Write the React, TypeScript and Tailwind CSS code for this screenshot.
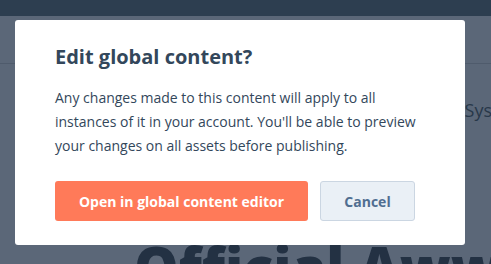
export default function App() {
	return (
		<div className="relative w-[491px] h-[264px] overflow-hidden bg-[#5b6778] font-['Open_Sans','Liberation_Sans',sans-serif]">
			<div className="h-4 bg-[#2d3e50]" />
			<div className="h-[48px] border-b border-[#4f5b6c]" />
			<div className="flex justify-end pt-[33px] h-[60px]">
				<span className="text-[18px] leading-[27px] text-[#28384a] -mr-[1px]">Sys</span>
			</div>
			<div className="pl-[134px] pt-[114px] text-[56px] leading-none font-extrabold text-[#233143] whitespace-nowrap">
				Official Awwwards
			</div>

			<div className="absolute left-[15px] top-[20px] w-[450px] h-[225px] rounded-[3px] bg-white px-10 pt-[23px]">
				<h2 className="text-[20px] leading-[28px] font-bold text-[#33475b]">Edit global content?</h2>
				<p className="mt-[15px] text-[14px] leading-[24px] text-[#33475b]">
					Any changes made to this content will apply to all instances of it in your account. You'll be able to preview your changes on all assets before publishing.
				</p>
				<div className="mt-[23px] flex gap-3">
					<button
						type="button"
						className="h-10 w-[253px] rounded-[3px] bg-[#ff7a59] text-[14px] font-bold text-white"
					>
						Open in global content editor
					</button>
					<button
						type="button"
						className="h-10 w-[95px] rounded-[3px] border border-[#cbd6e2] bg-[#eaf0f6] text-[14px] font-bold text-[#506e91]"
					>
						Cancel
					</button>
				</div>
			</div>
		</div>
	);
}
